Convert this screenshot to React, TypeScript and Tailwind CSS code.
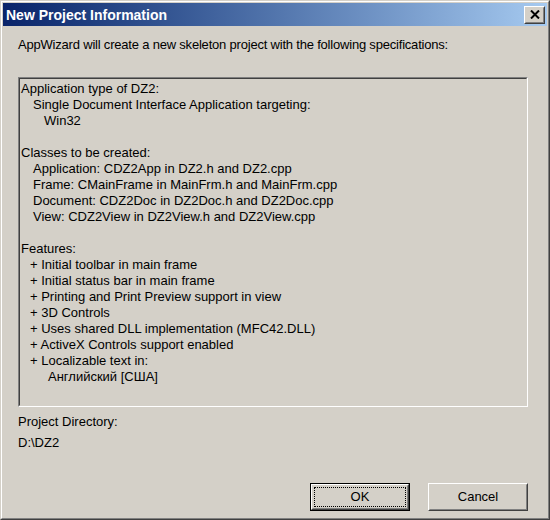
import React from "react";

const lines: { t: string; i: number }[] = [
  { t: "Application type of DZ2:", i: 0 },
  { t: "Single Document Interface Application targeting:", i: 12 },
  { t: "Win32", i: 23 },
  { t: "", i: 0 },
  { t: "Classes to be created:", i: 0 },
  { t: "Application: CDZ2App in DZ2.h and DZ2.cpp", i: 12 },
  { t: "Frame: CMainFrame in MainFrm.h and MainFrm.cpp", i: 12 },
  { t: "Document: CDZ2Doc in DZ2Doc.h and DZ2Doc.cpp", i: 12 },
  { t: "View: CDZ2View in DZ2View.h and DZ2View.cpp", i: 12 },
  { t: "", i: 0 },
  { t: "Features:", i: 0 },
  { t: "+ Initial toolbar in main frame", i: 9 },
  { t: "+ Initial status bar in main frame", i: 9 },
  { t: "+ Printing and Print Preview support in view", i: 9 },
  { t: "+ 3D Controls", i: 9 },
  { t: "+ Uses shared DLL implementation (MFC42.DLL)", i: 9 },
  { t: "+ ActiveX Controls support enabled", i: 9 },
  { t: "+ Localizable text in:", i: 9 },
  { t: "Английский [США]", i: 27 },
];

export default function App() {
  return (
    <div
      className="w-[550px] h-[520px] bg-[#d4d0c8] text-black text-[13px] leading-[16px] select-none"
      style={{ fontFamily: '"Liberation Sans", Arial, sans-serif' }}
    >
      <div className="w-full h-full border border-t-[#d4d0c8] border-l-[#d4d0c8] border-r-[#404040] border-b-[#404040]">
        <div className="w-full h-full border border-t-white border-l-white border-r-[#808080] border-b-[#808080] p-[1px] flex flex-col">
          {/* Title bar */}
          <div className="h-[23px] flex items-center justify-between bg-gradient-to-r from-[#0a246a] to-[#a6caf0] pl-[3px] pr-[2px]">
            <span className="text-white font-bold text-[14px] leading-[18px]">New Project Information</span>
            <div className="w-[21px] h-[18px] bg-[#d4d0c8] border border-t-white border-l-white border-r-[#404040] border-b-[#404040]">
              <div className="w-full h-full border border-t-[#d4d0c8] border-l-[#d4d0c8] border-r-[#808080] border-b-[#808080] flex items-center justify-center">
                <svg width="10" height="9" viewBox="0 0 10 9">
                  <path d="M1 0.5 L9 8.5 M9 0.5 L1 8.5" stroke="black" strokeWidth="2" />
                </svg>
              </div>
            </div>
          </div>

          {/* Body */}
          <div className="flex-1 flex flex-col px-[14px]">
            <div className="mt-[11px] pl-[1px] tracking-[-0.2px]">
              AppWizard will create a new skeleton project with the following specifications:
            </div>

            <div className="mt-[24px] ml-[1px] w-[510px] h-[330px] border border-t-[#808080] border-l-[#808080] border-r-white border-b-white">
              <div className="w-full h-full border border-t-[#404040] border-l-[#404040] border-r-[#d4d0c8] border-b-[#d4d0c8] pt-[2px] pl-[1px]">
                {lines.map((l, idx) => (
                  <div key={idx} className="h-[16px] whitespace-nowrap" style={{ paddingLeft: l.i }}>
                    {l.t}
                  </div>
                ))}
              </div>
            </div>

            <div className="mt-[7px] pl-[1px]">Project Directory:</div>
            <div className="mt-[5px] pl-[1px]">D:\DZ2</div>

            <div className="mt-auto mb-[6px] flex justify-end gap-[18px] pr-[5px]">
              {/* OK default button */}
              <div className="w-[100px] h-[28px] border border-black">
                <div className="w-full h-full border border-t-white border-l-white border-r-[#404040] border-b-[#404040]">
                  <div className="w-full h-full border border-t-[#d4d0c8] border-l-[#d4d0c8] border-r-[#808080] border-b-[#808080] p-[1px]">
                    <div className="w-full h-full border border-dotted border-black flex items-center justify-center">
                      OK
                    </div>
                  </div>
                </div>
              </div>
              <div className="w-[100px] h-[28px] border border-t-white border-l-white border-r-[#404040] border-b-[#404040]">
                <div className="w-full h-full border border-t-[#d4d0c8] border-l-[#d4d0c8] border-r-[#808080] border-b-[#808080] flex items-center justify-center">
                  Cancel
                </div>
              </div>
            </div>
          </div>
        </div>
      </div>
    </div>
  );
}
